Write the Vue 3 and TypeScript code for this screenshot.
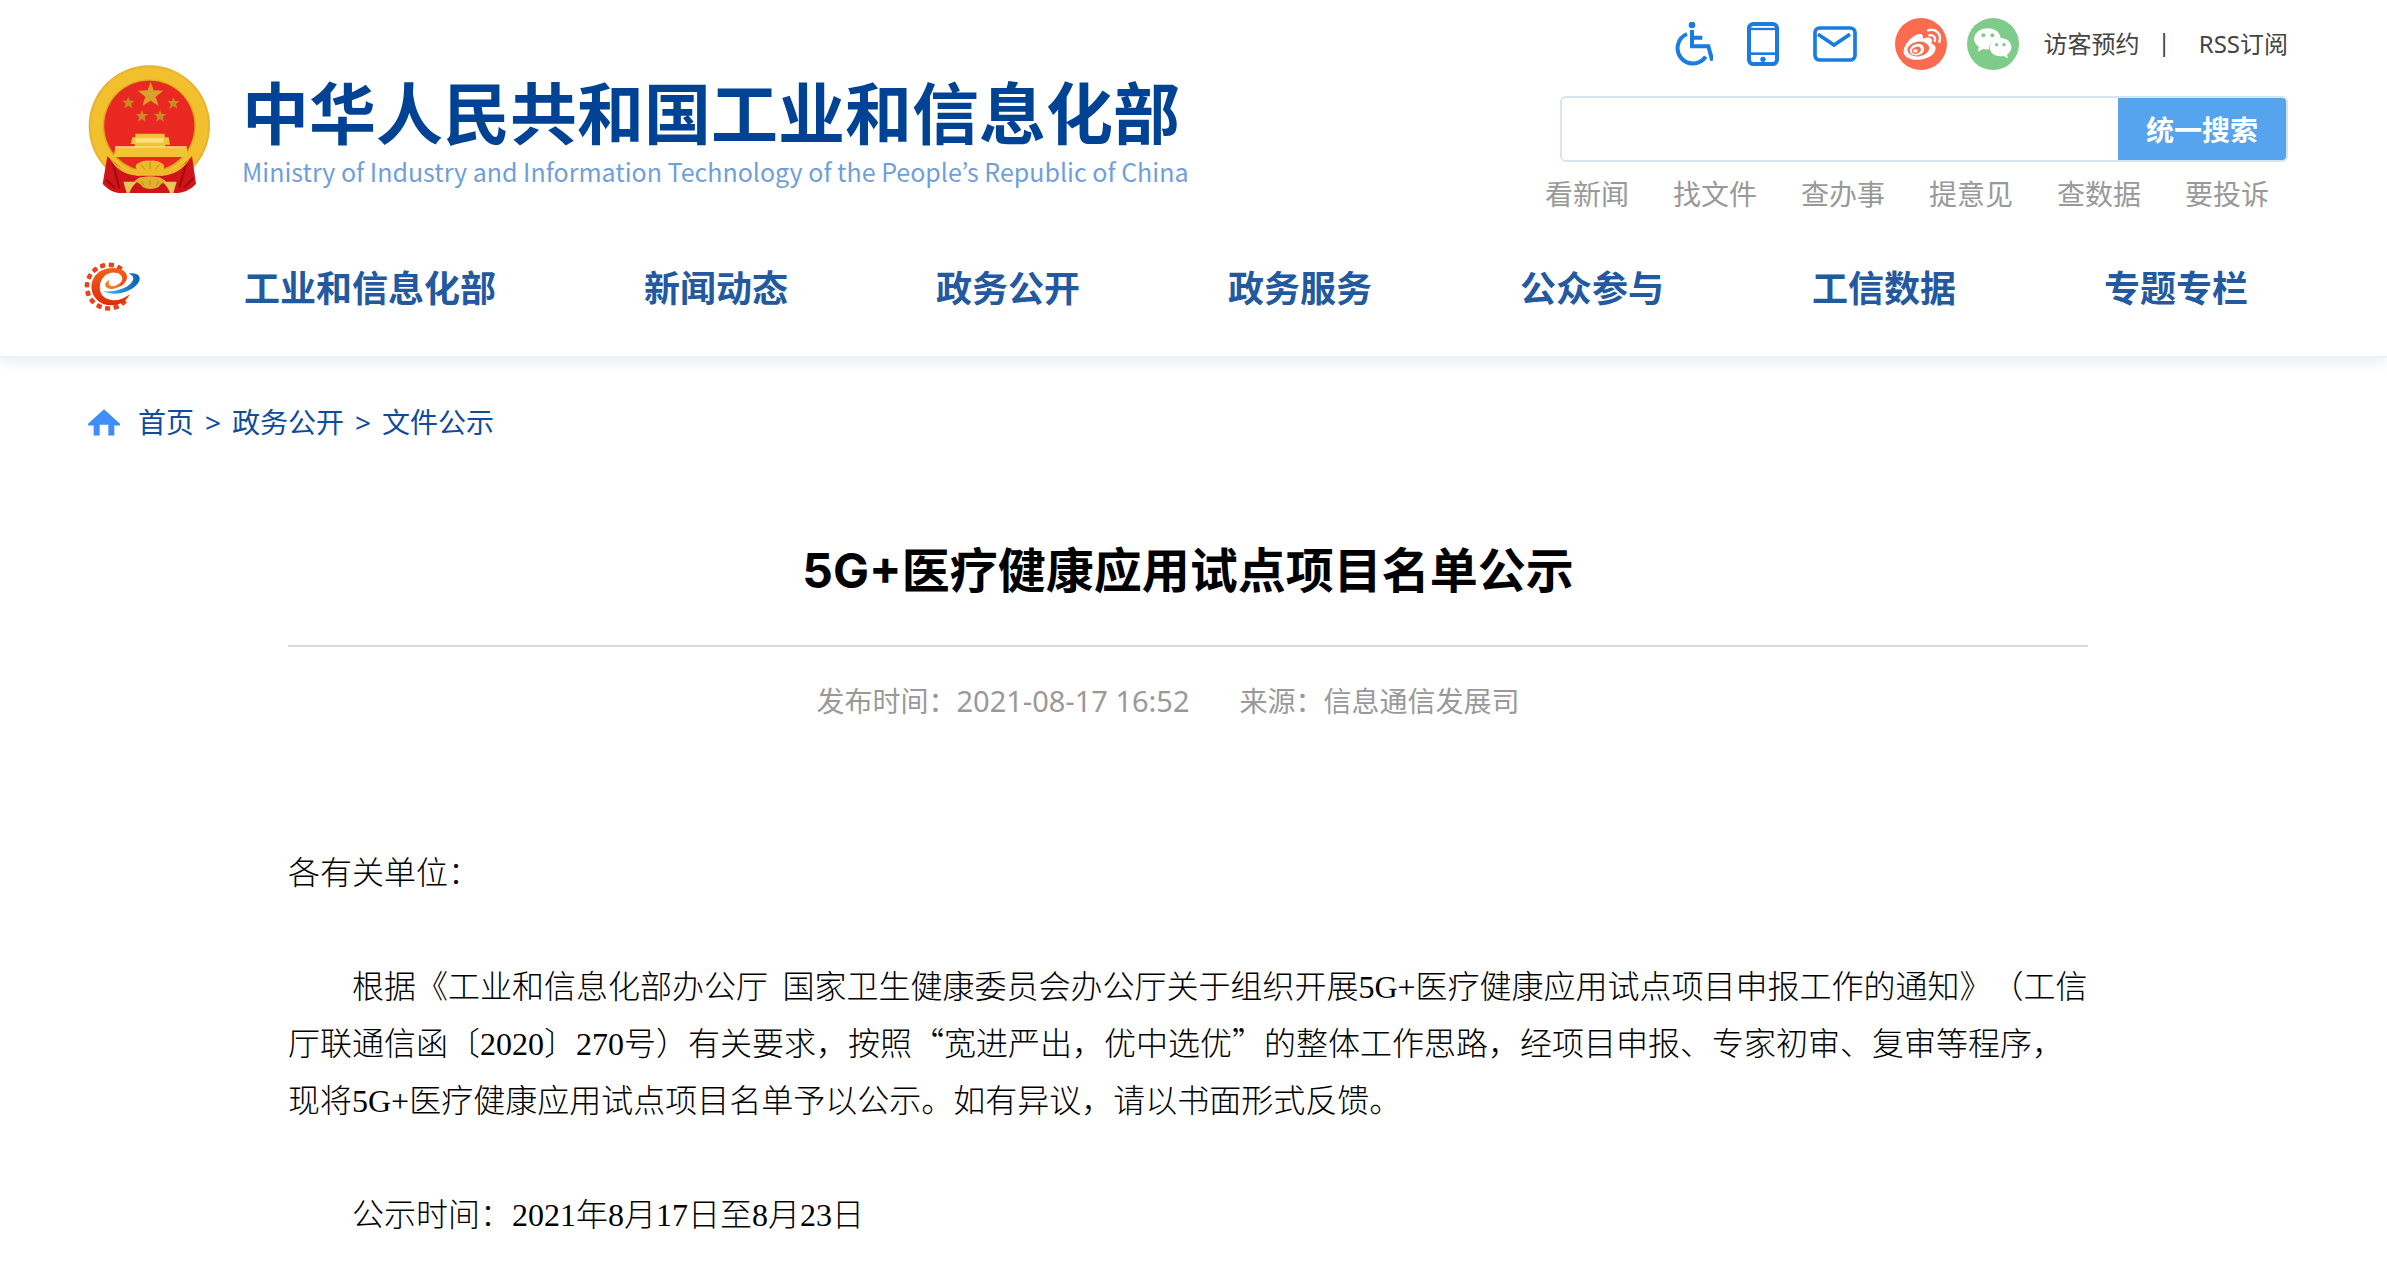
<script setup lang="ts">
import { ref } from 'vue'

const keyword = ref('')
const quickLinks: string[] = ['看新闻', '找文件', '查办事', '提意见', '查数据', '要投诉']
const navItems: string[] = ['工业和信息化部', '新闻动态', '政务公开', '政务服务', '公众参与', '工信数据', '专题专栏']
const teeth: number[] = [48, 71, 94, 117, 140, 163, 186, 209, 232, 255, 278, 301]
</script>

<template>
  <div class="page">
    <header class="header">
      <div class="top">
        <a class="brand" href="#">
          <svg class="emblem" viewBox="54 46 366 387" aria-hidden="true">
            <defs>
              <radialGradient id="gold" cx="50%" cy="50%" r="50%">
                <stop offset="73%" stop-color="#c98f16" />
                <stop offset="78%" stop-color="#f3c02c" />
                <stop offset="95%" stop-color="#f2c030" />
                <stop offset="100%" stop-color="#e3ad2c" />
              </radialGradient>
            </defs>
            <ellipse cx="238" cy="229" rx="182" ry="182" fill="url(#gold)" />
            <circle cx="238" cy="228" r="135" fill="#ea2822" />
            <path d="M242 96l9 26 29 1-23 18 9 28-24-16-25 16 9-28-22-18 29-1z" fill="#d7a12b" />
            <path id="s" d="M175 141l5 12 14 0-11 9 4 14-12-8-12 8 4-14-10-9 13 0z" fill="#c98c22" />
            <use href="#s" x="135" y="1" />
            <use href="#s" x="41" y="40" />
            <use href="#s" x="95" y="40" />
            <path d="M196 252h88v11h12l4 22h-14v8h64l3 29H131l5-30h58v-9h-12l5-20h9z" fill="#f2c237" />
            <path d="M196 265h85v14h-85z" fill="#fbe07c" />
            <path d="M136 292h214" stroke="#fae27c" stroke-width="4" />
            <path d="M112 320c30 26 50 45 88 58h78c40-14 64-34 88-58l12 82c-20 24-50 30-72 28H160c-24 2-44-8-62-28z" fill="#d0141a" />
            <path d="M128 338l20 78M350 338l-22 76M108 390l26 24M370 386l-28 28" stroke="#9f0d13" stroke-width="7" />
            <path d="M160 396l42 0q-16 12-24 34h-8zM320 396h-44q16 12 24 34h10z" fill="#e9c65a" />
            <path d="M118 322c26 38 62 42 82 36q-8-10 4-17 16-11 36-8 22-3 36 8 10 8 5 17c25 4 55-2 80-34-20 40-66 58-98 53q-26-10-50 0c-40 4-80-18-95-55z" fill="#efb92b" />
            <path d="M192 396q14-16 28-14 20-4 42 0 16 2 28 16-18 2-24 14-26 12-48 0-8-14-26-16z" fill="#e2b02c" />
            <path d="M240 358v-20M225 360l-12-15M255 360l13-15M240 408v-16M222 408l-8-14M258 408l9-14" stroke="#c48a1a" stroke-width="3" />
          </svg>
          <span class="names">
            <span class="name-cn">中华人民共和国工业和信息化部</span>
            <span class="name-en">Ministry of Industry and Information Technology of the People’s Republic of China</span>
          </span>
        </a>

        <div class="side">
          <div class="tools">
            <a class="tool access" href="#" aria-label="无障碍">
              <svg width="38" height="44" viewBox="78 66 114 132" fill="none" stroke="#1a7be0" stroke-width="12">
                <circle cx="129" cy="75" r="10" fill="#1a7be0" stroke="none" />
                <path d="M129 90v49h49l12 43M129 113h31M114 102a46 46 0 1 0 56 68" />
              </svg>
            </a>
            <a class="tool phone" href="#" aria-label="手机版">
              <svg width="32" height="44" viewBox="294 66 96 132" fill="none" stroke="#1a7be0" stroke-width="12">
                <rect x="300" y="72" width="84" height="120" rx="13" />
                <path d="M300 87h84" stroke-width="7" />
                <path d="M300 161h84" stroke-width="8" />
                <circle cx="342" cy="178" r="8" fill="#1a7be0" stroke="none" />
              </svg>
            </a>
            <a class="tool mail" href="#" aria-label="邮箱">
              <svg width="44" height="36" viewBox="492 78 132 108" fill="none" stroke="#1a7be0" stroke-width="11">
                <rect x="498" y="84" width="120" height="96" rx="14" />
                <path d="M507 103l48 32 48-32" />
              </svg>
            </a>
            <a class="tool weibo" href="#" aria-label="微博">
              <svg width="52" height="52" viewBox="738 54 156 156" fill="none">
                <circle cx="816" cy="132" r="78" fill="#fb6b50" />
                <path d="M803 104c14-5 22 1 18 12 15-6 29-5 28 8-1 5-3 7 2 9 11 4 12 17 2 28-23 24-78 24-88 0-6-20 19-50 38-57z" fill="#fff" />
                <ellipse cx="808" cy="147" rx="33" ry="22" transform="rotate(-9 808 147)" fill="#fb6b50" />
                <ellipse cx="804" cy="149" rx="22" ry="17" transform="rotate(-18 804 149)" fill="#fff" />
                <ellipse cx="802" cy="151" rx="14" ry="10" transform="rotate(-22 802 151)" fill="#fb6b50" />
                <ellipse cx="799" cy="153" rx="7" ry="5" fill="#fff" />
                <path d="M837 91c24-7 42 12 34 35M841 106c12-3 20 6 16 17" stroke="#fff" stroke-width="7" stroke-linecap="round" />
              </svg>
            </a>
            <a class="tool wechat" href="#" aria-label="微信">
              <svg width="52" height="52" viewBox="954 54 156 156">
                <circle cx="1032" cy="132" r="78" fill="#7fcb8a" />
                <path d="M1016 85c22 0 38 13 39 30-20 0-36 13-35 33-6 1-13 0-18-1l-16 8 4-14c-29-20-11-56 26-56z" fill="#fff" />
                <path d="M1055 114c18 0 32 11 32 28 0 10-5 17-13 22l3 11-13-7c-24 5-42-8-42-26 0-17 15-28 33-28z" fill="#fff" />
                <g fill="#7fcb8a">
                  <circle cx="1003" cy="106" r="6" /><circle cx="1030" cy="106" r="6" />
                  <circle cx="1043" cy="134" r="5" /><circle cx="1065" cy="134" r="5" />
                </g>
              </svg>
            </a>
            <div class="texts">
              <a href="#">访客预约</a>
              <span>|</span>
              <a href="#">RSS订阅</a>
            </div>
          </div>

          <form class="search" @submit.prevent>
            <input v-model="keyword" type="text" aria-label="搜索关键词" />
            <button type="submit">统一搜索</button>
          </form>

          <div class="quick">
            <a v-for="q in quickLinks" :key="q" href="#">{{ q }}</a>
          </div>
        </div>
      </div>

      <nav class="nav">
        <a class="gear" href="#" aria-label="首页">
          <svg width="56" height="49" viewBox="71 67 170 147" fill="none">
            <defs>
              <linearGradient id="red" x1="0" y1="0" x2="0" y2="1">
                <stop offset="0" stop-color="#f4601a" />
                <stop offset="1" stop-color="#e02a05" />
              </linearGradient>
              <linearGradient id="blue" x1="0" y1="0" x2="1" y2="0">
                <stop offset="0" stop-color="#3cc4f2" />
                <stop offset="1" stop-color="#0b5fb4" />
              </linearGradient>
            </defs>
            <g fill="#e8431a">
              <rect v-for="t in teeth" :key="t" x="-8" y="-73" width="16" height="14" rx="3" :transform="`translate(146 141) rotate(${-t + 78})`" />
            </g>
            <path d="M141 145c20-2 38-9 45-21 7-20-18-31-40-23-27 9-36 50-16 70 20 18 54 14 80-7-16 36-69 45-98 18-32-29-20-82 22-94 38-11 74 5 67 30-6 20-34 33-60 27z" fill="url(#red)" />
            <path d="M139 143c-8-9 0-18 9-23-4 9-2 15 5 19 13 3 28-6 34-18-5 21-30 35-48 22z" fill="#f47a2a" />
            <path d="M207 101c22-3 39 6 31 24-12 26-67 50-110 30 44 3 82-13 91-33 5-10-3-17-12-21z" fill="url(#blue)" />
          </svg>
        </a>
        <a v-for="n in navItems" :key="n" class="nav-item" href="#">{{ n }}</a>
      </nav>
    </header>

    <main class="main">
      <div class="crumbs">
        <svg width="32" height="27" viewBox="84 506 96 80" aria-hidden="true">
          <path d="M132 506l48 44v5h-17v30h-18v-32h-26v32h-18v-30H84v-5z" fill="#3f8ef7" />
        </svg>
        <a href="#">首页</a>
        <span>&gt;</span>
        <a href="#">政务公开</a>
        <span>&gt;</span>
        <a href="#">文件公示</a>
      </div>

      <article class="article">
        <h1>5G+医疗健康应用试点项目名单公示</h1>
        <div class="meta">
          <span>发布时间：</span>
          <time>2021-08-17 16:52</time>
          <span>来源：信息通信发展司</span>
        </div>
        <div class="body">
          <p>各有关单位：</p>
          <p class="indent">根据《工业和信息化部办公厅&nbsp;&thinsp;国家卫生健康委员会办公厅关于组织开展5G+医疗健康应用试点项目申报工作的通知》（工信厅联通信函〔2020〕270号）有关要求，按照<span class="quote">“</span>宽进严出，优中选优<span class="quote">”</span>的整体工作思路，经项目申报、专家初审、复审等程序，现将5G+医疗健康应用试点项目名单予以公示。如有异议，请以书面形式反馈。</p>
          <p class="indent">公示时间：2021年8月17日至8月23日</p>
        </div>
      </article>
    </main>
  </div>
</template>

<style>
body {
  background: #fff;
}
</style>

<style scoped>
.page {
  font-family: "Noto Sans", "Noto Sans CJK SC", sans-serif;
  text-spacing-trim: space-all;
  text-autospace: no-autospace;
  overflow: hidden;
}

a {
  color: inherit;
  text-decoration: none;
}

.header {
  padding: 0 99px 0 84px;
  border-bottom: 2px solid #ebf1f6;
  box-shadow: 0 4px 14px #e6eef5;
}

.top {
  display: flex;
  justify-content: space-between;
  height: 220px;
}

.brand {
  display: flex;
  align-items: flex-start;
  gap: 32px;
  padding: 65px 0 0 4px;
}

.emblem {
  width: 122px;
  height: 129px;
}

.names {
  display: flex;
  flex-direction: column;
  white-space: nowrap;
}

.name-cn {
  font-family: "Noto Sans CJK SC", sans-serif;
  font-size: 67px;
  font-weight: 700;
  line-height: 90px;
  color: #004395;
}

.name-en {
  font-family: "Noto Sans CJK KR", sans-serif;
  font-size: 25px;
  line-height: 32px;
  color: #6f9fdb;
}

.side {
  display: flex;
  flex-direction: column;
  align-items: flex-end;
  padding-top: 18px;
}

.tools {
  display: flex;
  align-items: center;
  height: 52px;
}

.tool svg {
  display: block;
}

.access,
.phone {
  margin-right: 34px;
}

.mail {
  margin-right: 38px;
}

.weibo {
  margin-right: 20px;
}

.wechat {
  margin-right: 24px;
}

.texts {
  display: flex;
  padding-bottom: 3px;
  color: #444;
  font-size: 24px;
}

.texts span {
  margin: 0 28px 0 18px;
}

.search {
  display: flex;
  box-sizing: border-box;
  width: 728px;
  height: 66px;
  margin-top: 26px;
  border: 2px solid #d8e4ee;
  border-radius: 6px;
  overflow: hidden;
}

.search input {
  flex: 1;
  min-width: 0;
  padding: 0 16px;
  border: 0;
  outline: 0;
  font-size: 28px;
}

.search button {
  width: 168px;
  padding: 0;
  border: 0;
  background: #55a4ed;
  color: #fff;
  font-family: inherit;
  font-size: 28px;
  font-weight: 700;
}

.quick {
  display: flex;
  gap: 44px;
  margin: 12px 19px 0 0;
  color: #999;
  font-size: 28px;
  line-height: 40px;
}

.nav {
  display: flex;
  align-items: center;
  height: 132px;
  padding-bottom: 4px;
  color: #22599f;
  font-size: 36px;
  font-weight: 700;
  white-space: nowrap;
}

.gear {
  margin-right: 30px;
}

.gear svg {
  display: block;
}

.nav-item {
  padding: 0 74px;
}

.main {
  padding: 44px 99px 0 88px;
}

.crumbs {
  display: flex;
  align-items: center;
  color: #0f4c9c;
  font-size: 28px;
  line-height: 40px;
}

.crumbs svg {
  margin-right: 18px;
}

.crumbs span {
  margin: 0 11px;
}

.article {
  max-width: 1800px;
  margin: 0 auto;
  padding-bottom: 40px;
}

h1 {
  margin: 97px 0 0;
  padding-bottom: 42px;
  border-bottom: 2px solid #d9d9d9;
  color: #000;
  font-family: Inter, "Noto Sans CJK SC", sans-serif;
  font-size: 48px;
  font-weight: 700;
  line-height: 64px;
  text-align: center;
}

.meta {
  display: flex;
  justify-content: center;
  margin-top: 34px;
  padding-right: 40px;
  color: #999;
  font-size: 28px;
  line-height: 40px;
}

.meta time {
  margin-right: 50px;
  font-size: 29px;
}

.body {
  margin-top: 124px;
  color: #000;
  font-family: "Liberation Serif", "Noto Sans CJK SC", serif;
  font-size: 32px;
  font-weight: 300;
  line-height: 57px;
}

.body p {
  margin: 0 0 57px;
}

.body .indent {
  text-indent: 64px;
}

.quote {
  font-family: "Noto Sans CJK SC", sans-serif;
  line-height: 32px;
}
</style>
